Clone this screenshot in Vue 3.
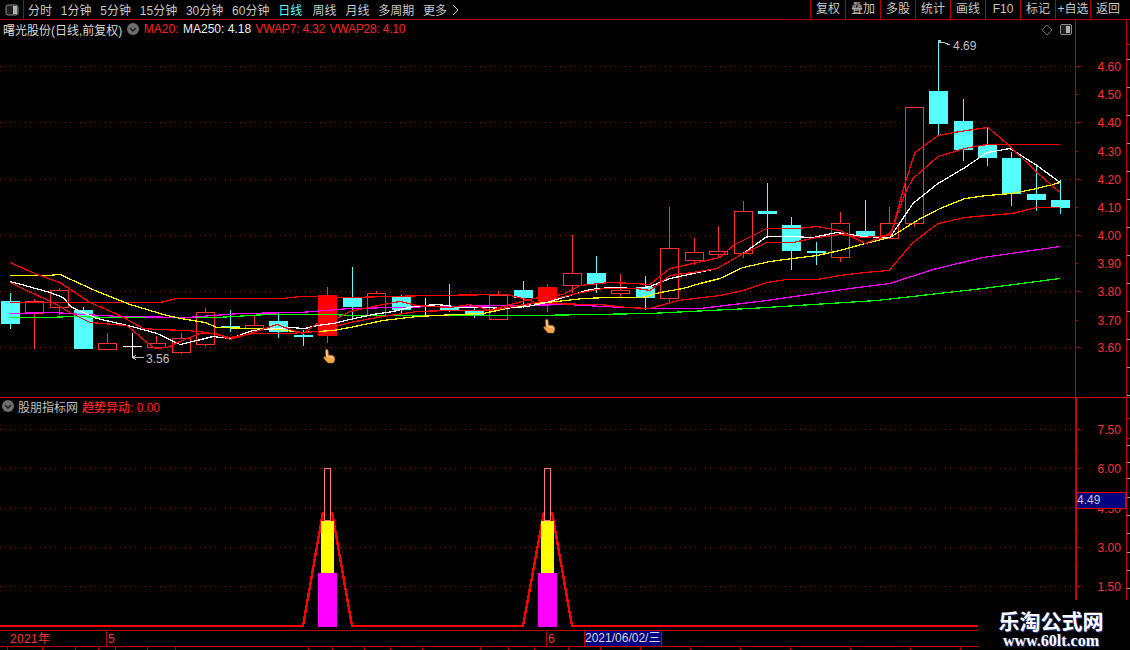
<script setup>
const navItems = ['分时', '1分钟', '5分钟', '15分钟', '30分钟', '60分钟', '日线', '周线', '月线', '多周期', '更多']
const toolItems = ['复权', '叠加', '多股', '统计', '画线', 'F10', '标记', '+自选', '返回']

// [left, bodyTop, bodyBottom, wickTop, wickBottom, kind]
const candles = [
  [1, 301, 324, 293, 329, 'c'], [25, 301, 313, 299, 349, 'r'], [50, 290, 307, 288, 315, 'r'],
  [74, 310, 349, 307, 349, 'c'], [98, 343, 349, 333, 349, 'r'], [123, 346, 346, 333, 358, 'w'],
  [147, 343, 347, 336, 349, 'r'], [172, 338, 352, 333, 354, 'r'], [196, 312, 344, 308, 346, 'r'],
  [221, 326, 328, 310, 332, 'c'], [245, 325, 328, 316, 331, 'r'], [269, 321, 332, 313, 338, 'c'],
  [294, 335, 337, 330, 346, 'c'], [318, 295, 336, 287, 343, 'f'], [343, 298, 307, 267, 320, 'c'],
  [367, 293, 315, 291, 318, 'r'], [392, 296, 310, 295, 313, 'c'], [416, 305, 305, 298, 315, 'w'],
  [440, 307, 310, 284, 312, 'c'], [465, 311, 315, 306, 318, 'c'], [489, 295, 319, 291, 319, 'r'],
  [514, 290, 298, 281, 308, 'c'], [538, 287, 303, 284, 312, 'f'], [563, 273, 285, 235, 293, 'r'],
  [587, 273, 284, 256, 293, 'c'], [611, 290, 293, 274, 297, 'r'], [636, 287, 298, 276, 310, 'c'],
  [660, 248, 298, 207, 303, 'r'], [685, 252, 260, 238, 265, 'r'], [709, 251, 254, 226, 258, 'r'],
  [734, 211, 253, 201, 258, 'r'], [758, 211, 214, 183, 238, 'c'], [782, 225, 251, 217, 270, 'c'],
  [807, 251, 253, 242, 265, 'c'], [831, 223, 257, 212, 262, 'r'], [856, 231, 237, 200, 237, 'c'],
  [880, 223, 238, 207, 238, 'r'], [905, 107, 223, 107, 227, 'r'], [929, 91, 124, 40, 135, 'c'],
  [954, 121, 150, 99, 161, 'c'], [978, 145, 158, 127, 166, 'c'], [1002, 158, 194, 152, 206, 'c'],
  [1027, 194, 200, 165, 211, 'c'], [1051, 200, 208, 180, 214, 'c']
]

const lines = [
  { color: '#00ff00', points: '10,317 47,317 73,316 113,317 217,317 267,314 333,314 350,315 533,315 650,313 750,308 877,300 983,288 1060,278' },
  { color: '#ff00ff', points: '10,313 53,312 83,314 120,316 187,317 240,313 300,312 350,308 437,306 523,305 567,304 603,306 650,308 700,308 767,300 850,288 890,283 933,269 983,257 1060,246' },
  { color: '#ff0000', points: '10,302 160,302 177,298 283,298 300,296 350,297 430,295 507,294 530,300 537,303 600,304 627,307 650,308 678,300 720,295 743,290 767,282 787,279 817,279 840,275 865,272 889,270 913,242 938,223 965,217 987,215 1012,213 1037,207 1060,207' },
  { color: '#ffff00', points: '10,275 47,275 60,274 95,290 130,304 167,315 181,318 205,322 217,327 254,328 278,329 302,332 333,330 350,327 383,320 417,316 457,314 483,313 507,308 533,303 557,301 583,298 610,297 643,297 660,292 683,288 700,283 720,278 743,267 770,261 793,258 817,255 840,250 865,243 890,237 917,220 940,208 965,198 987,195 1012,193 1037,188 1060,182' },
  { color: '#ffffff', points: '10,281 25,285 50,292 63,297 72,307 97,318 132,326 157,333 180,344 197,340 213,336 230,338 253,330 290,327 305,328 317,325 333,323 350,319 373,314 393,311 413,306 437,304 463,307 487,307 503,308 527,306 547,302 563,297 590,289 610,287 637,288 650,286 670,278 717,268 743,253 767,236 790,236 813,237 837,232 863,236 890,237 913,203 938,183 965,167 987,152 1010,148 1037,165 1060,182' },
  { color: '#ff0000', points: '10,262 37,274 60,282 90,302 120,315 143,328 157,329 187,330 207,332 230,337 253,333 290,333 317,331 350,322 383,316 417,311 450,310 490,310 537,302 577,293 603,288 637,288 650,290 670,275 693,272 717,268 743,253 767,242 793,242 817,237 840,234 863,237 890,235 905,193 913,178 938,156 965,148 987,144 1060,144' },
  { color: '#ff0000', points: '10,282 33,293 53,302 70,312 90,322 127,325 147,342 155,348 167,347 182,340 200,333 217,333 230,339 253,332 277,324 293,330 303,333 317,323 337,318 350,311 383,304 400,301 417,305 450,307 470,304 490,310 507,305 533,298 563,294 580,285 610,282 633,283 650,284 670,268 720,257 733,245 767,228 797,228 817,226 840,230 865,243 888,234 892,230 905,183 915,152 938,135 960,131 988,127 1008,144 1037,172 1060,192' }
]

const mainLabels = [
  ['4.60', 66], ['4.50', 94], ['4.40', 122], ['4.30', 151], ['4.20', 179], ['4.10', 207],
  ['4.00', 235], ['3.90', 263], ['3.80', 291], ['3.70', 320], ['3.60', 347]
]
const mainGrid = [66, 122, 179, 235, 291, 347]
const subLabels = [['7.50', 429], ['6.00', 468], ['4.50', 508], ['3.00', 547], ['1.50', 586]]
const subMinor = [449, 488, 528, 567]
const mainFarTicks = Array.from({ length: 13 }, (_, i) => 59 + i * 28)
const subFarTicks = [445, 462, 478, 497, 515, 533, 552, 570, 588]
const footTicks = [7, 42, 75, 98, 115, 147, 175, 308, 332, 364, 390, 422, 480, 508, 534, 568, 600, 640, 690, 740, 790, 850, 910, 960]
const hands = [[323, 349], [543, 319]]

const ridgeLines = [
  '0,626 303,626 323,512',
  '332,512 352,626 523,626 544,512',
  '552,512 572,626 1075,626'
]
const peaks = [
  { magenta: 318, yellow: 321, outline: 324 },
  { magenta: 538, yellow: 541, outline: 544 }
]
</script>

<template>
  <div class="screen">
    <header class="toolbar">
      <div class="panel-btn">
        <svg width="14" height="12" viewBox="0 0 14 12"><rect x="1" y="1" width="12" height="10" rx="2" class="panel-ico" /><rect x="8" y="2" width="4" height="8" fill="#b0b0b0" /></svg>
      </div>
      <nav class="nav">
        <span v-for="n in navItems" :key="n" :class="{ active: n === '日线' }">{{ n }}</span>
        <svg width="8" height="12" viewBox="0 0 8 12"><path d="M1 1 L6 6 L1 11" fill="none" stroke="#c8c8c8" /></svg>
      </nav>
      <div class="tools">
        <span v-for="t in toolItems" :key="t" class="tool">{{ t }}</span>
      </div>
    </header>

    <section class="main-panel">
      <div class="legend">
        <span class="title">曙光股份(日线,前复权)</span>
        <svg class="chev" width="12" height="12" viewBox="0 0 12 12"><circle cx="6" cy="6" r="6" fill="#6e6e6e" /><path d="M3 5 L6 8 L9 5" fill="none" stroke="#1c1c1c" stroke-width="1.4" /></svg>
        <span class="red">MA20:</span>
        <span class="white">MA250: 4.18</span>
        <span class="red vwap">VWAP7: 4.32</span>
        <span class="red vwap">VWAP28: 4.10</span>
      </div>
      <svg class="chart" width="1130" height="377" viewBox="0 20 1130 377">
        <line v-for="y in mainGrid" :key="'g' + y" x1="0" x2="1075" :y1="y + 0.5" :y2="y + 0.5" class="grid" />
        <line x1="1075.5" x2="1075.5" y1="20" y2="397" class="axis" />
        <line x1="1126.5" x2="1126.5" y1="20" y2="397" class="axis" />
        <line x1="1126" x2="1130" y1="44.5" y2="44.5" class="axis" />
        <line v-for="y in mainFarTicks" :key="'f' + y" x1="1127" x2="1130" :y1="y + 0.5" :y2="y + 0.5" class="far-tick" />
        <g v-for="l in mainLabels" :key="l[0]">
          <line x1="1075" :x2="mainGrid.includes(l[1]) ? 1081 : 1078" :y1="l[1] + 0.5" :y2="l[1] + 0.5" class="axis" />
          <text x="1097.5" :y="l[1] + 5" class="price">{{ l[0] }}</text>
        </g>

        <g v-for="c in candles" :key="c[0]">
          <template v-if="c[5] === 'w'">
            <line :x1="c[0] + 9.5" :x2="c[0] + 9.5" :y1="c[3]" :y2="c[4]" class="cross" />
            <line :x1="c[0]" :x2="c[0] + 19" :y1="c[1] + 0.5" :y2="c[1] + 0.5" class="cross" />
          </template>
          <template v-else-if="c[5] === 'c'">
            <line :x1="c[0] + 9.5" :x2="c[0] + 9.5" :y1="c[3]" :y2="c[4]" class="wick-c" />
            <rect :x="c[0]" :y="c[1]" width="19" :height="c[2] - c[1]" class="body-c" />
          </template>
          <template v-else>
            <line :x1="c[0] + 9.5" :x2="c[0] + 9.5" :y1="c[3]" :y2="c[1]" class="wick-r" />
            <line :x1="c[0] + 9.5" :x2="c[0] + 9.5" :y1="c[2]" :y2="c[4]" class="wick-r" />
            <rect v-if="c[5] === 'f'" :x="c[0]" :y="c[1]" width="19" :height="c[2] - c[1]" class="body-f" />
            <rect v-else :x="c[0] + 0.5" :y="c[1] + 0.5" width="18" :height="c[2] - c[1]" class="body-r" />
          </template>
        </g>

        <g transform="translate(0 0.5)">
          <polyline v-for="(l, i) in lines" :key="i" :points="l.points" :stroke="l.color" class="ma" />
        </g>

        <path d="M938 41.5 L941 40 M938 41.5 L941 43 M938 41.5 L944 42.5 L950 45" class="flag" />
        <text x="953" y="50" class="mark">4.69</text>
        <path d="M133 357.5 L136 355 M133 357.5 L136 360 M133 357.5 L144 357.5" class="flag" />
        <text x="146" y="363" class="mark">3.56</text>

        <g v-for="(h, i) in hands" :key="'h' + i" :transform="`translate(${h[0]} ${h[1]})`" class="hand">
          <path d="M2.5 1 Q3.5 -0.5 5 1 L5.5 6 L10 6.5 Q12 8 12 10 L10.5 14 L5 14 L1 9.5 Q0 7.5 2.2 7.6 L3 8.5 Z" fill="#f0a850" stroke="#b06a20" stroke-width="0.6" />
          <path d="M3.6 1.5 L4.2 8 M6 8 L10 8.5" stroke="#ffe0b0" stroke-width="1" fill="none" />
        </g>

        <path d="M1047 25 L1052 30 L1047 35 L1042 30 Z" fill="none" stroke="#6a6a6a" />
        <rect x="1060.5" y="24.5" width="11" height="10" rx="2" class="panel-ico" />
        <rect x="1066" y="26" width="4" height="7" fill="#b0b0b0" />
      </svg>
    </section>

    <section class="sub-panel">
      <div class="legend sub-legend">
        <svg class="chev-sub" width="12" height="12" viewBox="0 0 12 12"><circle cx="6" cy="6" r="6" fill="#6e6e6e" /><path d="M3 5 L6 8 L9 5" fill="none" stroke="#1c1c1c" stroke-width="1.4" /></svg>
        <span class="sub-title">股朋指标网</span>
        <span class="red strong">趋势异动: 0.00</span>
      </div>
      <svg class="chart" width="1130" height="232" viewBox="0 398 1130 232">
        <g v-for="l in subLabels" :key="l[0]">
          <line x1="0" x2="1075" :y1="l[1] + 0.5" :y2="l[1] + 0.5" class="grid" />
          <line x1="1075" x2="1081" :y1="l[1] + 0.5" :y2="l[1] + 0.5" class="axis" />
          <text x="1097.5" :y="l[1] + 5" class="price">{{ l[0] }}</text>
        </g>
        <line v-for="y in subMinor" :key="'m' + y" x1="1075" x2="1078" :y1="y + 0.5" :y2="y + 0.5" class="axis" />
        <rect x="1075" y="398" width="2" height="232" fill="#c80000" />
        <rect x="1126" y="398" width="1" height="232" fill="#c80000" />
        <path d="M1126 418.5 H1130 M1126 438.5 H1130" class="axis" />
        <line v-for="y in subFarTicks" :key="'s' + y" x1="1127" x2="1130" :y1="y + 0.5" :y2="y + 0.5" class="far-tick" />

        <rect x="1076.5" y="492.5" width="49" height="16" fill="#000080" stroke="#e00000" />
        <text x="1077" y="504" class="value">4.49</text>

        <polyline v-for="(r, i) in ridgeLines" :key="'r' + i" :points="r" class="base" />
        <g v-for="p in peaks" :key="p.magenta">
          <rect :x="p.magenta" y="573" width="19" height="54" fill="#ff00ff" />
          <rect :x="p.yellow" y="521" width="13" height="52" fill="#ffff00" />
          <rect :x="p.outline + 0.5" y="468.5" width="6" height="52" fill="none" stroke="#ff7878" />
        </g>
      </svg>
    </section>

    <footer class="timeline">
      <span class="cell year">2021年</span>
      <span class="cell month-5">5</span>
      <span class="cell month-6">6</span>
      <span class="cell date">2021/06/02/三</span>
    </footer>
    <div class="foot-ticks">
      <span v-for="x in footTicks" :key="x" class="foot-tick" :style="{ left: x + 'px' }"></span>
    </div>

    <div class="watermark">
      <div class="wm-cn">乐淘公式网</div>
      <div class="wm-en">www.60lt.com</div>
    </div>
  </div>
</template>

<style>
html, body { margin: 0; background: #000; }
</style>

<style scoped>
.screen {
  position: relative;
  width: 1130px;
  height: 650px;
  overflow: hidden;
  background: #000;
  display: flex;
  flex-direction: column;
  font: 12px "Liberation Sans", "Noto Sans CJK SC", sans-serif;
  color: #c8c8c8;
}
.toolbar {
  height: 19px;
  border-bottom: 1px solid #b00000;
  display: flex;
  align-items: center;
  flex: none;
}
.panel-btn {
  width: 23px;
  height: 19px;
  border-right: 1px solid #b00000;
  display: flex;
  align-items: center;
  justify-content: center;
  box-sizing: content-box;
}
.nav {
  display: flex;
  align-items: center;
  gap: 8.8px;
  padding-left: 4px;
  white-space: nowrap;
}
.nav svg { margin-left: -4px; }
.nav .active { color: #54ffff; margin-right: 1.5px; }
.tools {
  margin-left: auto;
  padding-right: 5px;
  display: flex;
  height: 19px;
}
.tool {
  width: 35px;
  box-sizing: border-box;
  border-left: 1px solid #b00000;
  text-align: center;
  line-height: 19px;
  white-space: nowrap;
}
.main-panel {
  position: relative;
  height: 377px;
  border-bottom: 1px solid #d00000;
  flex: none;
}
.sub-panel {
  position: relative;
  height: 232px;
  flex: none;
}
.chart { display: block; shape-rendering: crispEdges; }
.legend {
  position: absolute;
  left: 3px;
  top: 2px;
  z-index: 1;
  display: flex;
  align-items: center;
  gap: 4.5px;
  height: 14px;
  white-space: nowrap;
}
.title { color: #d8d8d8; }
.chev { margin-right: 0.5px; }
.red { color: #ff2020; }
.white { color: #f0f0f0; }
.vwap { letter-spacing: -0.2px; }
.strong { font-weight: 500; }
.sub-legend { left: 2px; top: 1px; gap: 4px; }
.sub-title { color: #c0c0c0; }
.panel-ico { fill: #202020; stroke: #8a8a8a; }

.grid { stroke: #960000; stroke-dasharray: 1 4; }
.axis { stroke: #b80000; fill: none; }
.far-tick { stroke: #9a9a9a; }
.price { fill: #ff3232; font-size: 12px; }
.mark { fill: #c0c0c0; font-size: 12px; }
.value { fill: #c8c8c8; font-size: 12px; }
.flag { stroke: #c0c0c0; fill: none; }
.cross { stroke: #ffffff; }
.wick-c { stroke: #54ffff; }
.body-c { fill: #54ffff; }
.wick-r { stroke: #ff3232; }
.body-f { fill: #ff0000; }
.body-r { fill: #000; stroke: #ff3232; }
.ma { fill: none; stroke-width: 1.25; }
.hand { shape-rendering: auto; }
.base { fill: none; stroke: #ff0000; stroke-width: 2.4; }

.timeline {
  height: 15px;
  border-top: 1px solid #b80000;
  border-bottom: 1px solid #b80000;
  display: flex;
  flex: none;
  color: #ff3232;
  line-height: 16px;
}
.cell { display: block; box-sizing: border-box; flex: none; white-space: nowrap; }
.year { width: 106px; padding-left: 10px; letter-spacing: 0.3px; }
.month-5 { width: 440px; border-left: 1px solid #b80000; padding-left: 1px; }
.month-6 { width: 38px; border-left: 1px solid #b80000; padding-left: 1px; }
.date {
  width: 78px;
  background: #000080;
  color: #d8d8d8;
  border-left: 1px solid #b80000;
  border-right: 1px solid #b80000;
  line-height: 15px;
}
.foot-ticks { position: relative; height: 3px; flex: none; }
.foot-tick {
  position: absolute;
  top: 0;
  width: 1px;
  height: 3px;
  background: #b80000;
}
.watermark {
  position: absolute;
  left: 978px;
  top: 600px;
  width: 152px;
  height: 50px;
  background: #000;
  text-align: center;
  color: #fff;
  padding-right: 26px;
  box-sizing: border-box;
}
.wm-cn {
  font: 700 21px/26px "Noto Sans CJK SC", sans-serif;
  padding-top: 7px;
  padding-left: 20px;
  white-space: nowrap;
  text-shadow: 1px 1px 1px #2a3f8a;
}
.wm-en {
  font: 700 16px/16px "Liberation Serif", serif;
  padding-left: 20px;
  white-space: nowrap;
  text-shadow: 1px 1px 1px #2a3f8a;
}
</style>
